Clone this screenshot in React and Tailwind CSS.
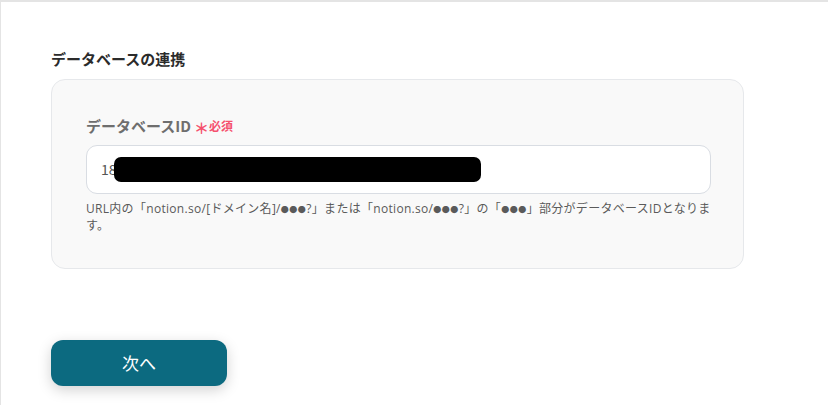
function Dots() {
  return <span className="inline-block text-[8px] leading-[12px] tracking-[0.5px]">●●●</span>
}

export default function App() {
  return (
    <div
      className="w-[828px] h-[405px] overflow-hidden bg-white border-t-2 border-l border-[#e4e4e4] text-[#333]"
      style={{ fontFamily: '"Noto Sans CJK JP", "Noto Sans", sans-serif' }}
    >
      <div className="pl-[50px] pt-[45px]">
        <h2 className="text-[15px] font-bold leading-[24px] text-[#2b2b2b]">データベースの連携</h2>

        <section className="mt-[8px] w-[693px] h-[190px] rounded-[14px] border border-[#e6e8eb] bg-[#f9f9f9] px-[34px] pt-[32px]">
          <div className="flex items-center">
            <span className="text-[15px] font-bold text-[#6e6e6e] leading-[24px]">データベースID</span>
            <span className="ml-[3px] mt-[4px] text-[15px] font-bold text-[#f5506e] leading-[24px]">＊</span>
            <span className="text-[12px] font-bold text-[#f5506e] leading-[24px]">必須</span>
          </div>

          <div className="mt-[5px] relative flex items-center h-[49px] w-[625px] rounded-[11px] border border-[#d9dde3] bg-white px-[14px]">
            <span className="text-[14px] text-[#555]">18</span>
            <div className="absolute left-[27px] top-[11px] w-[367px] h-[25px] rounded-[7px] bg-black" />
          </div>

          <p
            className="mt-[6px] w-[625px] text-[12px] leading-[17px] tracking-[0.3px] text-[#5a5a5a]"
            style={{ fontFamily: '"Open Sans", "Noto Sans CJK JP", sans-serif' }}
          >
            URL内の「notion.so/[ドメイン名]/<Dots />?」または「notion.so/<Dots />?」の「<Dots />」部分がデータベースIDとなります。
          </p>
        </section>

        <button className="mt-[71px] w-[176px] h-[46px] rounded-[12px] bg-[#0c6a80] text-white text-[17px] shadow-[0_4px_14px_rgba(0,0,0,0.18)]">
          次へ
        </button>
      </div>
    </div>
  )
}
